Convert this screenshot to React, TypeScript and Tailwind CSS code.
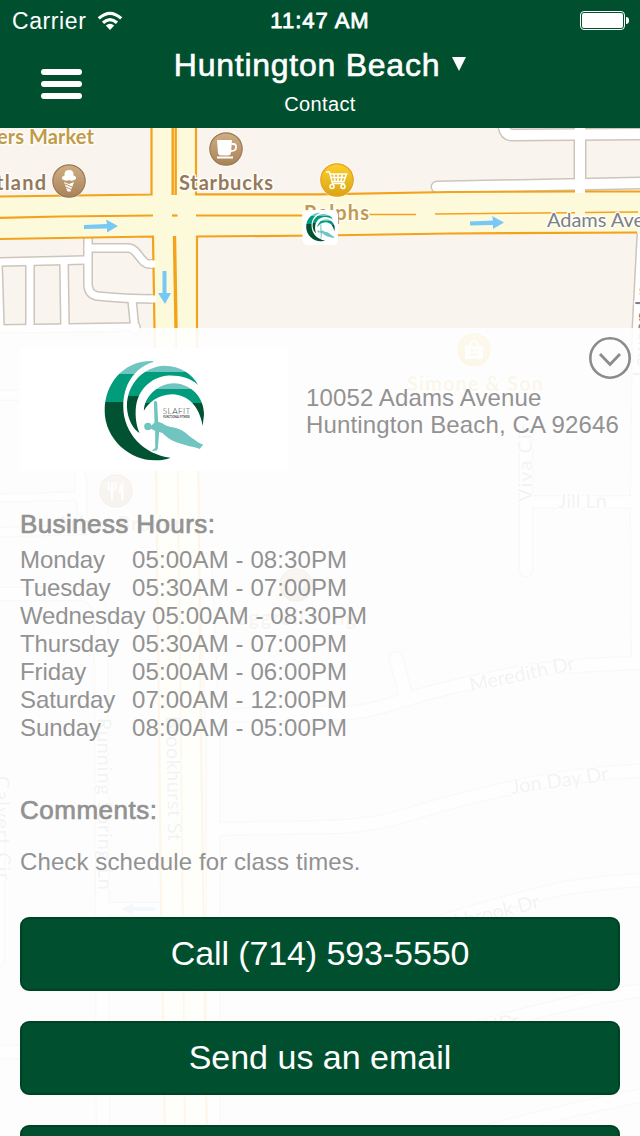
import React from 'react';

const HOURS = [
    { day: 'Monday', time: '05:00AM - 08:30PM' },
    { day: 'Tuesday', time: '05:30AM - 07:00PM' },
    { day: 'Wednesday', time: '05:00AM - 08:30PM' },
    { day: 'Thursday', time: '05:30AM - 07:00PM' },
    { day: 'Friday', time: '05:00AM - 06:00PM' },
    { day: 'Saturday', time: '07:00AM - 12:00PM' },
    { day: 'Sunday', time: '08:00AM - 05:00PM' },
];

// side streets: path + width
const STREETS: { d: string; w: number }[] = [
    { d: 'M-5 262 L86 260', w: 7 },
    { d: 'M88 236 L88 284 Q88 294 97 296 Q125 299 156 299', w: 7 },
    { d: 'M88 248 L129 248 C138 249 141 264 149 264 L156 264', w: 7 },
    { d: 'M-2 264 L0 328', w: 7 },
    { d: 'M30 262 L30 328', w: 7 },
    { d: 'M64 262 L65 328', w: 7 },
    { d: 'M132 300 L135 330', w: 7 },
    { d: 'M-5 329 L136 327', w: 7 },
    { d: 'M503 118 Q503 135 512 135 L645 134', w: 10 },
    { d: 'M580 120 L580 200', w: 10 },
    { d: 'M437 187 L645 183', w: 10 },
    { d: 'M643 232 L638 328 L636 500 L637 655', w: 10 },
    { d: 'M526 435 L526 570', w: 12 },
    { d: 'M526 502 L636 502', w: 11 },
    { d: 'M-5 395 L80 395 L80 500', w: 9 },
    { d: 'M-5 498 L80 496', w: 7 },
    { d: 'M82 480 L82 530 L-5 532', w: 8 },
    { d: 'M-5 594 L82 594 Q100 596 101 620 L103 1140', w: 12 },
    { d: 'M103 909 L165 909', w: 12 },
    { d: 'M205 560 L213 740 L213 1140', w: 12 },
    { d: 'M213 716 L320 713 Q360 716 400 701 Q460 683 530 671 Q580 664 645 663', w: 12 },
    { d: 'M407 700 L396 658', w: 12 },
    { d: 'M213 829 L330 827 Q375 826 410 814 Q470 796 530 784 Q590 772 645 771', w: 12 },
    { d: 'M400 935 Q490 905 560 889 Q600 882 645 880', w: 12 },
    { d: 'M400 1050 Q500 1020 560 1006 Q600 996 645 990', w: 12 },
    { d: 'M420 1150 Q540 1115 645 1095', w: 12 },
    { d: 'M-5 1052 L103 1052', w: 12 },
    { d: 'M-1 800 L-1 960', w: 10 },
];

const OUTER = 'M218 63 C130 60 72 130 72 212 C72 300 150 362 222 362 C245 362 262 358 270 354 C190 345 128 280 128 200 C128 135 160 85 218 66Z';

const LogoMark: React.FC<{ id: string; className: string; withText?: boolean }> = ({ id, className, withText }) => (
    <svg viewBox="70 60 304 304" className={className}>
        <defs>
            <linearGradient id={id + 'a'} gradientUnits="userSpaceOnUse" x1="0" y1="0" x2="0" y2="400">
                <stop offset="0.253" stopColor="#70c5c0" />
                <stop offset="0.253" stopColor="#009c7c" />
                <stop offset="0.463" stopColor="#009c7c" />
                <stop offset="0.463" stopColor="#005232" />
            </linearGradient>
            <linearGradient id={id + 'b'} gradientUnits="userSpaceOnUse" x1="0" y1="0" x2="0" y2="400">
                <stop offset="0.24" stopColor="#70c5c0" />
                <stop offset="0.24" stopColor="#009c7c" />
                <stop offset="0.42" stopColor="#009c7c" />
                <stop offset="0.42" stopColor="#005232" />
            </linearGradient>
            <linearGradient id={id + 'c'} gradientUnits="userSpaceOnUse" x1="0" y1="0" x2="0" y2="400">
                <stop offset="0.368" stopColor="#70c5c0" />
                <stop offset="0.368" stopColor="#009c7c" />
                <stop offset="0.47" stopColor="#009c7c" />
                <stop offset="0.47" stopColor="#005232" />
            </linearGradient>
        </defs>
        <path d={OUTER} fill={`url(#${id}a)`} />
        <path d="M353 135 C335 100 300 78 252 77 C190 80 139 130 139 200 C140 240 160 270 177 280 C165 255 163 220 167 195 C178 140 220 110 265 107 C300 106 330 115 353 135Z" fill={`url(#${id}b)`} />
        <path d="M190 213 C192 170 230 132 280 130 C335 132 372 175 371 225 L367 258 C360 215 335 165 275 163 C235 165 205 185 190 213Z" fill={`url(#${id}c)`} />
        <g fill="#70c5c0">
            <circle cx="202" cy="260" r="11" />
            <path d="M220 186 Q225 180 230 187 L233 246 L247 251 C268 268 290 258 312 277 C330 292 350 307 363 313 L369 314 L358 328 C345 320 330 322 310 314 C280 308 262 296 246 280 L236 277 L232 328 Q230 335 213 333 L224 325 L224 274 L206 264 L222 248Z" />
        </g>
        {withText && (
            <g fill="#3c3c3c" fontFamily="Lato, sans-serif">
                <text x="247" y="223" fontSize="25" fontWeight="300" textLength="83">SLAFIT</text>
                <text x="248" y="236" fontSize="8" fontWeight="700" textLength="80" lengthAdjust="spacingAndGlyphs">FUNCTIONAL FITNESS</text>
            </g>
        )}
    </svg>
);

const Pin: React.FC<{ x: number; y: number; gold?: boolean; children?: React.ReactNode }> = ({ x, y, gold, children }) => (
    <g transform={`translate(${x} ${y})`}>
        <circle r="17.5" fill="#fff" opacity="0.8" />
        <circle r="16.2" fill={gold ? 'url(#gold)' : 'url(#tan)'} stroke={gold ? '#e8a01c' : '#9c7a56'} strokeWidth="1.2" />
        {children}
    </g>
);

const CityMap: React.FC = () => (
    <svg viewBox="0 128 640 1008" width="640" height="1008" className="absolute inset-0" fontFamily="Lato, sans-serif">
        <defs>
            <linearGradient id="tan" x1="0" y1="0" x2="0" y2="1">
                <stop offset="0" stopColor="#d0ae84" />
                <stop offset="1" stopColor="#a98358" />
            </linearGradient>
            <linearGradient id="gold" x1="0" y1="0" x2="0" y2="1">
                <stop offset="0" stopColor="#fcd02e" />
                <stop offset="1" stopColor="#d9a514" />
            </linearGradient>
        </defs>
        <rect y="128" width="640" height="1008" fill="#f9f5ee" />
        <g fill="none" stroke="#cdc5bb">
            {STREETS.map((s, i) => <path key={i} d={s.d} strokeWidth={s.w + 3} strokeLinecap="round" />)}
        </g>
        <g fill="none" stroke="#fff">
            {STREETS.map((s, i) => <path key={i} d={s.d} strokeWidth={s.w} strokeLinecap="round" />)}
        </g>

        {/* Brookhurst St and Adams Ave */}
        <path d="M151 120 L153 328 L161 900 L165 1140 L207 1140 L201 740 L197 328 L196 120Z" fill="#fdfadb" />
        <path d="M0 196 L153 194 L320 194 L450 192 L640 191 L640 233 L450 234 L320 236 L153 237 L0 239Z" fill="#fdfadb" />
        <path d="M575 188h10v5h-10z" fill="#fff" />
        <g fill="none" stroke="#f3a21b" strokeWidth="2.2">
            <path d="M151.500 128 V194.500 L0 196.500" />
            <path d="M196 128 V194.300 L320 194.300 L450 192 L575 191.500" />
            <path d="M585 191.500 L640 191.500" />
            <path d="M172.700 128 V195 M175.700 128 V195" strokeWidth="2.400" />
            <path d="M0 217.800 L60 216.500 L153 215.500" />
            <path d="M172 215.500 H177.500" />
            <path d="M196 215.500 L302 215.500" />
            <path d="M369 214.500 H416" strokeWidth="1.3" />
            <path d="M435 214 L575 212.800 M585 212.500 L638 212" strokeWidth="1.5" />
            <path d="M0 239 L153 236.500 L154.500 328 L161 900 L165 1140" />
            <path d="M637 232.500 L450 233.500 L320 235.500 L197 236.500 L197 328 L201 740 L207 1140" />
            <path d="M174.500 236 L176 328" strokeWidth="3.400" />
            <path d="M176 328 L181 740 L185 1140" strokeWidth="1.600" />
        </g>
        <path d="M150 260.500 h5 v7 h-5z M151 295.500 h5 v7 h-5z" fill="#fff" />

        {/* one-way arrows */}
        <g fill="#78c8f6">
            <path id="arrow" d="M84 225 L107 224 L106 219.500 L118 226 L107 232.500 L107 228.500 L84 229Z" />
            <use href="#arrow" transform="translate(386 -3.500)" />
            <path d="M162.500 271 h4 v22 h4.500 L165 304 L158 293 h4.500Z" />
            <path d="M155 907 v4 h-22 v4 l-12 -6 l12 -6 v4Z" />
        </g>

        <Pin x={226} y={149}>
            <path d="M-9 -9 H6 L5 4 Q4.500 6.500 2 6.500 H-5 Q-7.500 6.500 -8 4Z M-9 7.500 H7 V9.500 H-9Z" fill="#fff" />
            <path d="M5.500 -5 h2 q2.800 0 2.500 3.500 q0 3.500 -5 3.500" fill="none" stroke="#fff" strokeWidth="1.800" />
        </Pin>
        <Pin x={69} y={181}>
            <path d="M-7 -2 Q-7.500 -5 -4.500 -5.500 Q-5 -11 0 -11 Q5 -11 4.500 -5.500 Q7.500 -5 7 -2 Q3 1 0 -1 Q-3 1 -7 -2Z M-5 1 L0 3 L5 1 L1.500 10.500 H-1.500Z" fill="#fff" />
            <path d="M-4 3 L3 6 M-3 6 L3 9" stroke="#b8946a" />
        </Pin>
        <Pin x={337} y={180} gold>
            <g fill="none" stroke="#fff" strokeWidth="1.500">
                <path d="M-11 -8 H-7.500 L-4.500 3.500 H7.500 M-7 -6 H9.500 L7 1.500 H-5 M-6 -2.500 H8 M-3 -6 L-2 2 M1 -6 V2 M5 -6 L4 2" />
                <circle cx="-5" cy="6.500" r="2" /><circle cx="6" cy="6.500" r="2" />
            </g>
        </Pin>
        <Pin x={474} y={350} gold>
            <path d="M-9 -4 H9 V9 H-9Z" fill="#fff" />
            <path d="M-4 -4 Q-4 -9 0 -9 Q4 -9 4 -4" fill="none" stroke="#fff" strokeWidth="2" />
            <path d="M-4 0.500 H4 M-4 4.500 H4" stroke="#e5b51e" strokeWidth="1.500" />
        </Pin>
        <Pin x={116} y={491}>
            <path d="M-7.500 -9 V-4 Q-7.500 -1 -4 -1 V9 M-0.500 -9 V-4 Q-0.500 -1 -4 -1 M-4 -9 V-1" fill="none" stroke="#fff" strokeWidth="2" />
            <path d="M7.500 -9 V9 H5 V2 H2.500 Q2.500 -6 7.500 -9Z" fill="#fff" />
        </Pin>
        <Pin x={296} y={585}>
            <path d="M-8 -2 H8 Q7 7 0 8 Q-7 7 -8 -2Z" fill="#fff" />
        </Pin>

        <g fontSize="20" fontWeight="700" stroke="#fffdf8" strokeWidth="3" strokeLinejoin="round" paintOrder="stroke">
            <text x="-3" y="144" fill="#c09b4c" textLength="97">ers Market</text>
            <text x="-4" y="189.500" fill="#94795c" textLength="50">tland</text>
            <text x="179" y="189.500" fill="#94795c" textLength="94">Starbucks</text>
            <text x="304" y="220" fill="#c09b4c" textLength="65">Ralphs</text>
            <text x="407" y="391" fill="#d9a83a" textLength="136">Simone &amp; Son</text>
            <text x="56" y="531" fill="#b09a80" textLength="126">Arbor Broiler</text>
            <text x="236" y="625" fill="#b09a80" textLength="120">Eggroll King</text>
        </g>
        <g fontSize="20" fill="#808080" stroke="#fff" strokeWidth="2.500" strokeLinejoin="round" paintOrder="stroke">
            <text x="547" y="227" textLength="97">Adams Ave</text>
            <text transform="translate(647 377) rotate(-88)" textLength="92">Lawson Ln</text>
            <text transform="translate(532 502) rotate(-90)" textLength="76">Viva Cir</text>
            <text x="558" y="507.500" textLength="49">Jill Ln</text>
            <text transform="translate(471 692) rotate(-12)" textLength="107">Meredith Dr</text>
            <text transform="translate(512 794) rotate(-8)" textLength="98">Jon Day Dr</text>
            <text transform="translate(432 935) rotate(-14)" textLength="112">Oakbrook Dr</text>
            <text transform="translate(440 1044) rotate(-12)" textLength="82">Bluefield Dr</text>
            <text transform="translate(97 718) rotate(89.500)" textLength="172">Running Spring Ln</text>
            <text transform="translate(166 716) rotate(89)" textLength="125">Brookhurst St</text>
            <text transform="translate(-5 776) rotate(89)" textLength="104">Calvert Cir</text>
        </g>

        <rect x="302.500" y="210" width="35.500" height="35" rx="5" fill="#fff" />
    </svg>
);

const StatusBar: React.FC = () => (
    <div className="grid h-10 grid-cols-3 items-center px-3 text-[22px] leading-10">
        <div className="flex items-center gap-[11px] pt-px">
            <span className="text-[23px] tracking-[0.6px]">Carrier</span>
            <svg width="26" height="20" viewBox="0 0 26 20" fill="none" stroke="#fff" strokeWidth="3.200">
                <path d="M1.800 7.400 Q13 -2.800 24.200 7.400" />
                <path d="M6 11.800 Q13 5.400 20 11.800" />
                <path d="M8.800 14.500 Q13 10.800 17.200 14.500 L13 19Z" fill="#fff" stroke="none" />
            </svg>
        </div>
        <span className="pt-px text-center tracking-[1px] [-webkit-text-stroke:0.8px_white]">11:47 AM</span>
        <div className="-mr-px flex items-center justify-end gap-px">
            <div className="h-[19px] w-[45px] rounded-[4px] border border-white p-px">
                <div className="h-full w-full rounded-[2px] bg-white" />
            </div>
            <div className="h-[7px] w-[3px] rounded-r-full bg-white" />
        </div>
    </div>
);

const Header: React.FC = () => (
    <header className="h-[128px] bg-[#00502f] text-white">
        <StatusBar />
        <div className="grid grid-cols-[160px_1fr_160px]">
            <button className="ml-[41px] mt-[29px] flex h-[30px] w-[41px] flex-col justify-between" aria-label="Menu">
                <span className="h-1.5 w-full rounded-full bg-white" />
                <span className="h-1.5 w-full rounded-full bg-white" />
                <span className="h-1.5 w-full rounded-full bg-white" />
            </button>
            <div className="flex flex-col items-center whitespace-nowrap">
                <h1 className="mt-[5px] flex items-center gap-3 text-[32px] leading-10 tracking-[0.75px] [-webkit-text-stroke:0.6px_white]">
                    Huntington Beach
                    <svg width="14" height="14" viewBox="0 0 14 14" className="-mt-[3px]"><path d="M0 0H14L7 14Z" fill="#fff" /></svg>
                </h1>
                <p className="mt-[7px] text-[20px] leading-6 tracking-[0.35px]">Contact</p>
            </div>
        </div>
    </header>
);

const ActionButton: React.FC<{ children?: React.ReactNode; className: string }> = ({ children, className }) => (
    <button className={'h-[74px] shrink-0 rounded-[9px] border-2 border-[#004226] bg-[#00502f] pb-0.5 text-[34px] leading-[68px] text-white ' + className}>
        {children}
    </button>
);

const App: React.FC = () => {
    return (
        <div className="flex h-[1136px] w-[640px] flex-col overflow-hidden bg-white font-['Liberation_Sans',Arial,sans-serif]">
            <Header />
            <main className="relative h-[1008px] overflow-hidden">
                <CityMap />
                <LogoMark id="pin" className="absolute left-[306px] top-[84px] h-[30px] w-[29px]" />
                <div className="relative mt-[200px] flex h-[808px] flex-col bg-[#fefefe]/91 text-[24px] leading-7 text-[#929292]">
                    <div className="flex h-36 pl-5 pr-[9px]">
                        <div className="mt-5 flex h-[123px] w-[268px] items-center justify-center bg-white">
                            <LogoMark id="logo" className="mt-px h-[101px] w-[101px]" withText />
                        </div>
                        <div className="ml-[18px] flex flex-1 flex-col whitespace-nowrap pt-[9px]">
                            <svg width="42" height="42" viewBox="0 0 42 42" fill="none" stroke="#8b8b8b" className="self-end">
                                <circle cx="21" cy="21" r="19.700" strokeWidth="2.600" />
                                <path d="M11 17 L21 27.500 L31 17" strokeWidth="2.800" />
                            </svg>
                            <p className="mt-[5px] leading-[27px] tracking-[0.13px]">10052 Adams Avenue<br />Huntington Beach, CA 92646</p>
                        </div>
                    </div>
                    <div className="mt-[38px] flex flex-col px-5">
                        <h2 className="relative top-px text-[26px] tracking-[0.4px] [-webkit-text-stroke:0.7px_#929292]">Business Hours:</h2>
                        <ul className="mt-[9px]">
                            {HOURS.map((h) => (
                                <li key={h.day} className="flex whitespace-pre">
                                    <span className="min-w-[112px] -tracking-[0.1px]">{h.day + ' '}</span>
                                    <span className="tracking-[0.1px]">{h.time}</span>
                                </li>
                            ))}
                        </ul>
                        <h2 className="mt-[54px] text-[26px] tracking-[0.5px] [-webkit-text-stroke:0.7px_#929292]">Comments:</h2>
                        <p className="mt-6 tracking-[0.1px]">Check schedule for class times.</p>
                        <ActionButton className="mt-[41px] -tracking-[0.1px]">Call (714) 593-5550</ActionButton>
                        <ActionButton className="mt-[30px] tracking-[0px]">Send us an email</ActionButton>
                        <ActionButton className="mt-[30px]" />
                    </div>
                </div>
            </main>
        </div>
    );
};

export default App;
